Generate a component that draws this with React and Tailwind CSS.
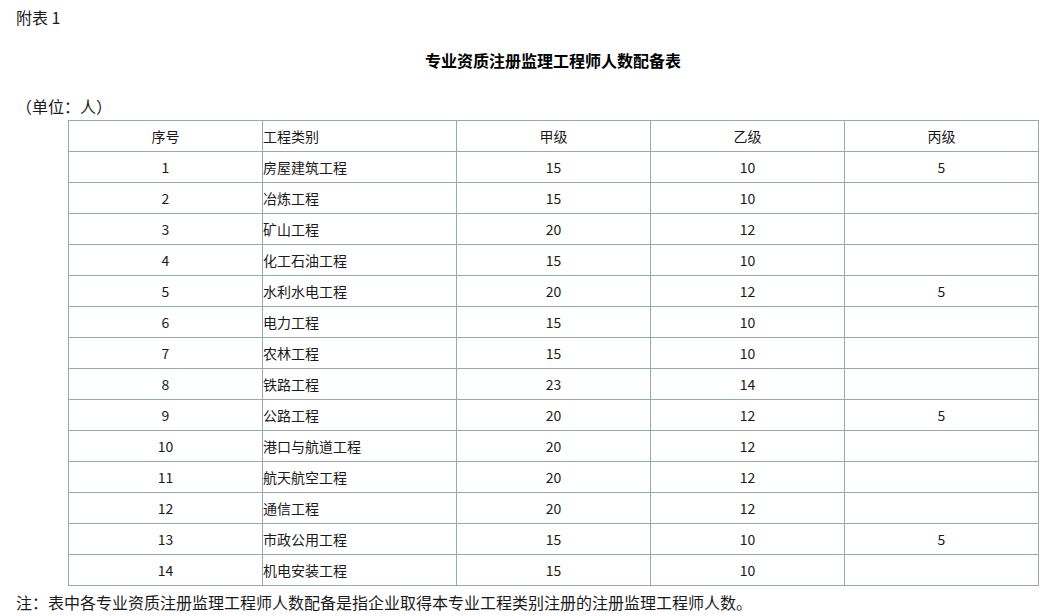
import React from 'react';

const rows = [
  ['1', '房屋建筑工程', '15', '10', '5'],
  ['2', '冶炼工程', '15', '10', ''],
  ['3', '矿山工程', '20', '12', ''],
  ['4', '化工石油工程', '15', '10', ''],
  ['5', '水利水电工程', '20', '12', '5'],
  ['6', '电力工程', '15', '10', ''],
  ['7', '农林工程', '15', '10', ''],
  ['8', '铁路工程', '23', '14', ''],
  ['9', '公路工程', '20', '12', '5'],
  ['10', '港口与航道工程', '20', '12', ''],
  ['11', '航天航空工程', '20', '12', ''],
  ['12', '通信工程', '20', '12', ''],
  ['13', '市政公用工程', '15', '10', '5'],
  ['14', '机电安装工程', '15', '10', ''],
];

const cell = 'border border-[#9aa8b4] h-[31px] p-0 w-[194px] font-normal';

export default function App() {
  return (
    <div className="bg-white text-[#1a1a1a] font-['Microsoft_YaHei','Noto_Sans_CJK_SC',sans-serif] text-[14px] leading-none w-[1064px] h-[616px] overflow-hidden">
      <div className="pl-[16px] pt-[9px] text-[16px]">附表 1</div>
      <div className="ml-[68px] w-[970px] text-center font-bold text-[16px] mt-[27px] text-black">
        专业资质注册监理工程师人数配备表
      </div>
      <div className="pl-[16px] mt-[30px] text-[16px]">（单位：人）</div>
      <table className="ml-[68px] mt-[6px] border-collapse table-fixed w-[971px]">
        <thead>
          <tr>
            <th className={`${cell} text-center`}>序号</th>
            <th className={`${cell} text-left`}>工程类别</th>
            <th className={`${cell} text-center`}>甲级</th>
            <th className={`${cell} text-center`}>乙级</th>
            <th className={`${cell} text-center`}>丙级</th>
          </tr>
        </thead>
        <tbody>
          {rows.map((r) => (
            <tr key={r[0]}>
              <td className={`${cell} text-center`}>{r[0]}</td>
              <td className={`${cell} text-left`}>{r[1]}</td>
              <td className={`${cell} text-center`}>{r[2]}</td>
              <td className={`${cell} text-center`}>{r[3]}</td>
              <td className={`${cell} text-center`}>{r[4]}</td>
            </tr>
          ))}
        </tbody>
      </table>
      <div className="pl-[16px] mt-[8px] text-[16px]">
        注：表中各专业资质注册监理工程师人数配备是指企业取得本专业工程类别注册的注册监理工程师人数。
      </div>
    </div>
  );
}
